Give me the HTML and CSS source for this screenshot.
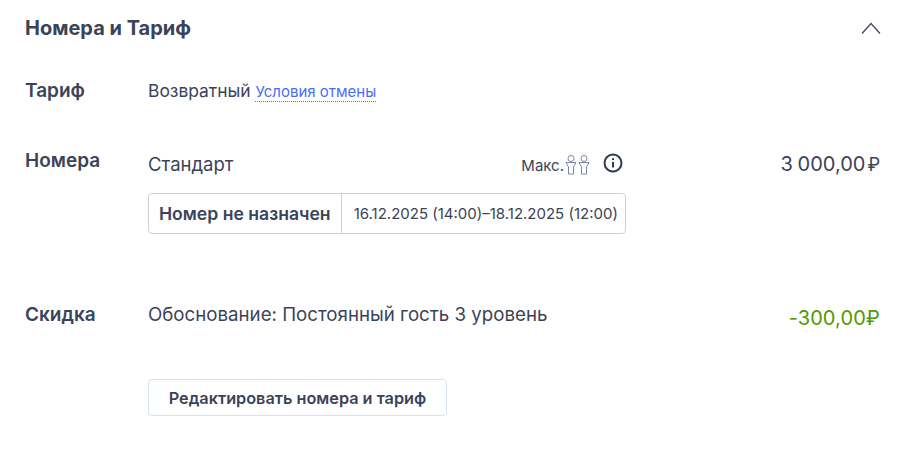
FILE: index.html
```html
<!DOCTYPE html>
<html lang="ru">
<head>
    <meta charset="UTF-8">
    <title>Номера и Тариф</title>
    <link rel="stylesheet" href="styles.css">
</head>
<body>
    <section class="panel">
        <header class="panel-head">
            <h2>Номера и Тариф</h2>
            <svg class="chevron" width="20" height="12" viewBox="0 0 20 12" fill="none" stroke="#3b4358" stroke-width="1.2"><path d="M1 11.5 10 1.5l9 10"/></svg>
        </header>

        <div class="row row-tariff">
            <div class="label">Тариф</div>
            <div class="value value-tariff">Возвратный <a class="link" href="#">Условия отмены</a></div>
        </div>

        <div class="row row-rooms">
            <div class="label">Номера</div>
            <div class="room">
                <div class="room-top">
                    <span class="value value-room">Стандарт</span>
                    <span class="max">Макс.
                        <svg width="12" height="20" viewBox="0 0 12 20" fill="none" stroke="#7f84ad" stroke-width="1"><circle cx="6" cy="3.5" r="3"/><path d="M1 7.5h10l-2.5 4.5v7h-5v-7z"/></svg>
                        <svg width="12" height="20" viewBox="0 0 12 20" fill="none" stroke="#7f84ad" stroke-width="1"><circle cx="6" cy="3.5" r="3"/><path d="M1 7.5h10l-2.5 4.5v7h-5v-7z"/></svg>
                    </span>
                    <svg class="info" width="20" height="20" viewBox="0 0 20 20" fill="none" stroke="#2f3a55" stroke-width="2"><circle cx="10" cy="10" r="8.5"/><path d="M10 9v5.5"/><path d="M10 5.2v1.8"/></svg>
                </div>
                <div class="room-box">
                    <b>Номер не назначен</b>
                    <span>16.12.2025 (14:00)–18.12.2025 (12:00)</span>
                </div>
            </div>
            <div class="price price-room">3 000,00<span class="rub">₽</span></div>
        </div>

        <div class="row row-discount">
            <div class="label">Скидка</div>
            <div class="value value-reason">Обоснование: Постоянный гость 3 уровень</div>
            <div class="price price-green">-300,00₽</div>
        </div>

        <button class="edit-btn">Редактировать номера и тариф</button>
    </section>
</body>
</html>
```

FILE: styles.css
```css
body {
    margin: 0;
    background: #fff;
    font-family: Inter, "Noto Sans", sans-serif;
    color: #3b4358;
}

.panel {
    padding: 16px 28px 0 25px;
}

.panel-head {
    display: flex;
    justify-content: space-between;
    align-items: center;
    height: 24px;
}

.panel-head h2 {
    margin: 0;
    font-size: 20px;
    font-weight: 700;
    line-height: 24px;
}

.chevron {
    margin-right: -1px;
}

.row {
    display: grid;
    grid-template-columns: 123px 478px 1fr;
}

.row-tariff {
    margin-top: 39px;
}

.row-rooms {
    margin-top: 45px;
}

.row-discount {
    margin-top: 69px;
}

.label {
    font-size: 19px;
    font-weight: 600;
    line-height: 24px;
}

.value {
    line-height: 24px;
}

.value-tariff {
    font-size: 17.4px;
}

.value-room {
    font-size: 18.5px;
}

.value-reason {
    font-size: 18.7px;
}

.link {
    font-size: 15px;
    color: #4a6cf7;
    text-decoration: none;
    border-bottom: 1px dotted #4a6cf7;
}

.room {
    margin-top: 2px;
}

.room-top {
    display: flex;
    align-items: center;
    height: 26px;
}

.room-top .value {
    flex: 1;
}

.max {
    display: flex;
    align-items: center;
    gap: 1px;
    margin-top: 2px;
    font-size: 15px;
}

.info {
    margin: -2px 3px 0 13px;
}

.room-box {
    display: flex;
    align-items: center;
    height: 39px;
    margin-top: 16px;
    border: 1px solid #ccd0d6;
    border-radius: 4px;
    white-space: nowrap;
}

.room-box b {
    padding: 0 10px;
    font-size: 17.6px;
    font-weight: 600;
    line-height: 39px;
    border-right: 1px solid #ccd0d6;
}

.room-box span {
    padding: 0 8px 0 12px;
    font-size: 15px;
}

.price {
    font-size: 20px;
    line-height: 26px;
    text-align: right;
    white-space: nowrap;
    word-spacing: -1px;
}

.price-room {
    margin-top: 2px;
}

.rub {
    margin-left: 2px;
    font-size: 18px;
}

.price-green {
    margin-top: 2px;
    color: #4f9a00;
    letter-spacing: 0.1px;
}

.edit-btn {
    display: block;
    margin: 48px 0 0 123px;
    width: 299px;
    height: 37px;
    background: #fff;
    border: 1px solid #d5e1ee;
    border-radius: 4px;
    font-family: inherit;
    font-size: 16.25px;
    font-weight: 600;
    color: #3b4358;
}
```
